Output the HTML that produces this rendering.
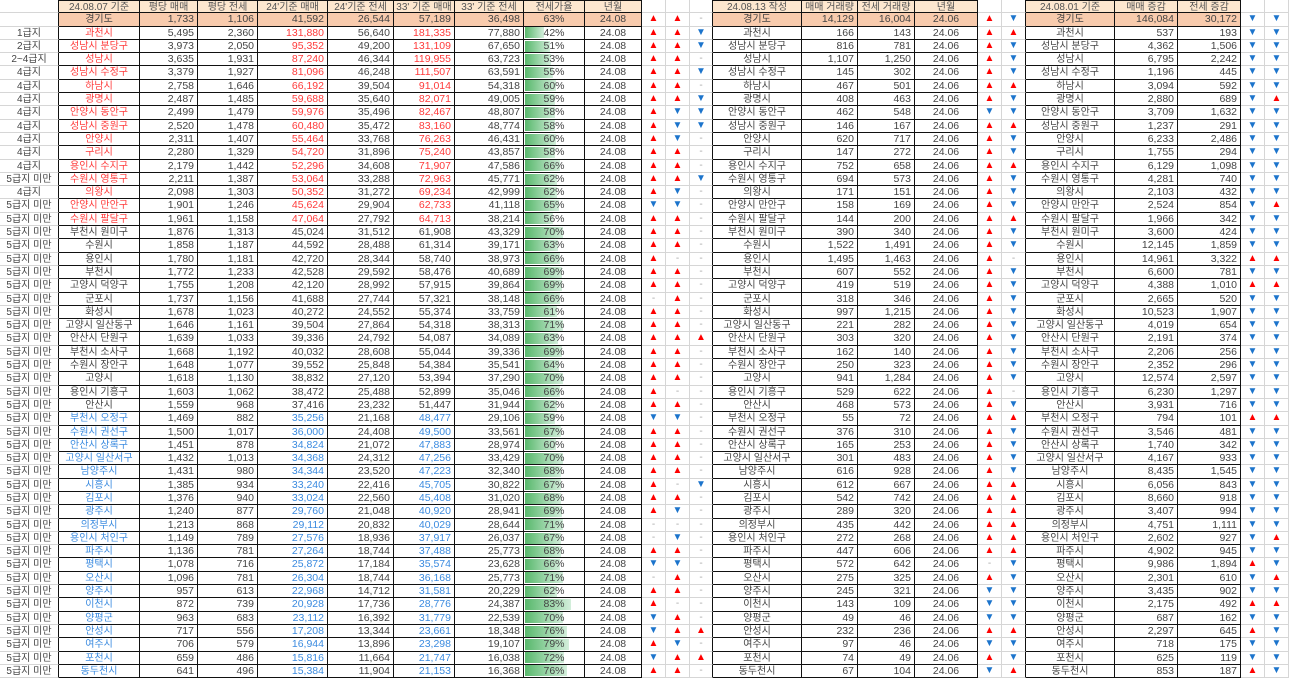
<!DOCTYPE html>
<html><head><meta charset="utf-8">
<style>
html,body{margin:0;padding:0;background:#fff;width:1289px;height:679px;overflow:hidden}
table{display:block;width:1289px;font-family:"Liberation Sans","Noto Sans CJK KR",sans-serif;font-size:10.5px;color:#444;border-spacing:0}
tbody{display:block}
tr{display:flex;height:13.31px;overflow:hidden}
td{display:block;flex:none;box-sizing:border-box;height:13.31px;padding:0 3px 0 0;border-right:1px solid #111;border-bottom:1px solid #111;text-align:right;white-space:nowrap;overflow:hidden;line-height:12px}
td:nth-child(1){width:59px}td:nth-child(2){width:81px}td:nth-child(3){width:58px}td:nth-child(4){width:60px}td:nth-child(5){width:70px}td:nth-child(6){width:66px}td:nth-child(7){width:61px}td:nth-child(8){width:69px}td:nth-child(9){width:61px}td:nth-child(10){width:57px}td:nth-child(11){width:24px}td:nth-child(12){width:24px}td:nth-child(13){width:23px}td:nth-child(14){width:89px}td:nth-child(15){width:56px}td:nth-child(16){width:57px}td:nth-child(17){width:63px}td:nth-child(18){width:24px}td:nth-child(19){width:24px}td:nth-child(20){width:89px}td:nth-child(21){width:63px}td:nth-child(22){width:63px}td:nth-child(23){width:24px}td:nth-child(24){width:24px}
tr.t td{border-top:1px solid #111;line-height:11px}
td.l{border-bottom:1px solid #d6d6d6;text-align:center;padding:1px 0 0 0;color:#444;font-size:10px}
tr.t td.l,tr.t td.g{border-top:none}
td.g{border-right:1px solid #d6d6d6;border-bottom:1px solid #d6d6d6;text-align:center;padding:0;font-size:10px}
td.k{border-right:1px solid #111}
td.c{text-align:center;padding:0}
td:nth-child(2),td:nth-child(14),td:nth-child(20){font-size:10px;padding-top:1px}
.r{color:#ff3a3a}
.b{color:#3b8be0}
.u{color:#f00}
.d{color:#1c74cc}
.n{color:#aaa}
tr.h td:not(.g):not(.l){background:#fde7cf;text-align:center;padding:1px 0 0 0;color:#555;font-size:10px}
tr.s td:not(.g):not(.l){background:#f8cbad}
td.p{text-align:center;padding:0;background:linear-gradient(90deg,#58b86c,#d3eedb) 1px 50%/var(--w) 11px no-repeat}
</style></head><body>
<table>
<tr class="h t"><td class=l></td><td>24.08.07 기준</td><td>평당 매매</td><td>평당 전세</td><td>24'기준 매매</td><td>24'기준 전세</td><td>33' 기준 매매</td><td>33' 기준 전세</td><td>전세가율</td><td>년월</td><td class=g></td><td class=g></td><td class="g k"></td><td>24.08.13 작성</td><td>매매 거래량</td><td>전세 거래량</td><td>년월</td><td class=g></td><td class="g k"></td><td>24.08.01 기준</td><td>매매 증감</td><td>전세 증감</td><td class=g></td><td class=g></td></tr>
<tr class=s><td class=l></td><td class=c>경기도</td><td>1,733</td><td>1,106</td><td>41,592</td><td>26,544</td><td>57,189</td><td>36,498</td><td class=c>63%</td><td class=c>24.08</td><td class="g u">▲</td><td class="g u">▲</td><td class="g k n">-</td><td class=c>경기도</td><td>14,129</td><td>16,004</td><td class=c>24.06</td><td class="g u">▲</td><td class="g k d">▼</td><td class=c>경기도</td><td>146,084</td><td>30,172</td><td class="g d">▼</td><td class="g d">▼</td></tr>
<tr><td class=l>1급지</td><td class="c r">과천시</td><td>5,495</td><td>2,360</td><td class=r>131,880</td><td>56,640</td><td class=r>181,335</td><td>77,880</td><td class=p style="--w:19px">42%</td><td class=c>24.08</td><td class="g u">▲</td><td class="g u">▲</td><td class="g k d">▼</td><td class=c>과천시</td><td>166</td><td>143</td><td class=c>24.06</td><td class="g u">▲</td><td class="g k u">▲</td><td class=c>과천시</td><td>537</td><td>193</td><td class="g d">▼</td><td class="g d">▼</td></tr>
<tr><td class=l>2급지</td><td class="c r">성남시 분당구</td><td>3,973</td><td>2,050</td><td class=r>95,352</td><td>49,200</td><td class=r>131,109</td><td>67,650</td><td class=p style="--w:25px">51%</td><td class=c>24.08</td><td class="g u">▲</td><td class="g u">▲</td><td class="g k d">▼</td><td class=c>성남시 분당구</td><td>816</td><td>781</td><td class=c>24.06</td><td class="g u">▲</td><td class="g k d">▼</td><td class=c>성남시 분당구</td><td>4,362</td><td>1,506</td><td class="g d">▼</td><td class="g d">▼</td></tr>
<tr><td class=l>2~4급지</td><td class="c r">성남시</td><td>3,635</td><td>1,931</td><td class=r>87,240</td><td>46,344</td><td class=r>119,955</td><td>63,723</td><td class=p style="--w:26px">53%</td><td class=c>24.08</td><td class="g u">▲</td><td class="g u">▲</td><td class="g k n">-</td><td class=c>성남시</td><td>1,107</td><td>1,250</td><td class=c>24.06</td><td class="g u">▲</td><td class="g k d">▼</td><td class=c>성남시</td><td>6,795</td><td>2,242</td><td class="g d">▼</td><td class="g d">▼</td></tr>
<tr><td class=l>4급지</td><td class="c r">성남시 수정구</td><td>3,379</td><td>1,927</td><td class=r>81,096</td><td>46,248</td><td class=r>111,507</td><td>63,591</td><td class=p style="--w:28px">55%</td><td class=c>24.08</td><td class="g u">▲</td><td class="g u">▲</td><td class="g k d">▼</td><td class=c>성남시 수정구</td><td>145</td><td>302</td><td class=c>24.06</td><td class="g u">▲</td><td class="g k d">▼</td><td class=c>성남시 수정구</td><td>1,196</td><td>445</td><td class="g d">▼</td><td class="g d">▼</td></tr>
<tr><td class=l>4급지</td><td class="c r">하남시</td><td>2,758</td><td>1,646</td><td class=r>66,192</td><td>39,504</td><td class=r>91,014</td><td>54,318</td><td class=p style="--w:31px">60%</td><td class=c>24.08</td><td class="g u">▲</td><td class="g u">▲</td><td class="g k n">-</td><td class=c>하남시</td><td>467</td><td>501</td><td class=c>24.06</td><td class="g u">▲</td><td class="g k u">▲</td><td class=c>하남시</td><td>3,094</td><td>592</td><td class="g d">▼</td><td class="g d">▼</td></tr>
<tr><td class=l>4급지</td><td class="c r">광명시</td><td>2,487</td><td>1,485</td><td class=r>59,688</td><td>35,640</td><td class=r>82,071</td><td>49,005</td><td class=p style="--w:30px">59%</td><td class=c>24.08</td><td class="g u">▲</td><td class="g u">▲</td><td class="g k d">▼</td><td class=c>광명시</td><td>408</td><td>463</td><td class=c>24.06</td><td class="g u">▲</td><td class="g k d">▼</td><td class=c>광명시</td><td>2,880</td><td>689</td><td class="g d">▼</td><td class="g u">▲</td></tr>
<tr><td class=l>4급지</td><td class="c r">안양시 동안구</td><td>2,499</td><td>1,479</td><td class=r>59,976</td><td>35,496</td><td class=r>82,467</td><td>48,807</td><td class=p style="--w:30px">58%</td><td class=c>24.08</td><td class="g u">▲</td><td class="g d">▼</td><td class="g k d">▼</td><td class=c>안양시 동안구</td><td>462</td><td>548</td><td class=c>24.06</td><td class="g d">▼</td><td class="g k d">▼</td><td class=c>안양시 동안구</td><td>3,709</td><td>1,632</td><td class="g d">▼</td><td class="g d">▼</td></tr>
<tr><td class=l>4급지</td><td class="c r">성남시 중원구</td><td>2,520</td><td>1,478</td><td class=r>60,480</td><td>35,472</td><td class=r>83,160</td><td>48,774</td><td class=p style="--w:30px">58%</td><td class=c>24.08</td><td class="g u">▲</td><td class="g d">▼</td><td class="g k d">▼</td><td class=c>성남시 중원구</td><td>146</td><td>167</td><td class=c>24.06</td><td class="g u">▲</td><td class="g k u">▲</td><td class=c>성남시 중원구</td><td>1,237</td><td>291</td><td class="g d">▼</td><td class="g d">▼</td></tr>
<tr><td class=l>4급지</td><td class="c r">안양시</td><td>2,311</td><td>1,407</td><td class=r>55,464</td><td>33,768</td><td class=r>76,263</td><td>46,431</td><td class=p style="--w:31px">60%</td><td class=c>24.08</td><td class="g u">▲</td><td class="g d">▼</td><td class="g k n">-</td><td class=c>안양시</td><td>620</td><td>717</td><td class=c>24.06</td><td class="g u">▲</td><td class="g k d">▼</td><td class=c>안양시</td><td>6,233</td><td>2,486</td><td class="g d">▼</td><td class="g d">▼</td></tr>
<tr><td class=l>4급지</td><td class="c r">구리시</td><td>2,280</td><td>1,329</td><td class=r>54,720</td><td>31,896</td><td class=r>75,240</td><td>43,857</td><td class=p style="--w:30px">58%</td><td class=c>24.08</td><td class="g u">▲</td><td class="g u">▲</td><td class="g k n">-</td><td class=c>구리시</td><td>147</td><td>272</td><td class=c>24.06</td><td class="g u">▲</td><td class="g k d">▼</td><td class=c>구리시</td><td>1,755</td><td>294</td><td class="g d">▼</td><td class="g d">▼</td></tr>
<tr><td class=l>4급지</td><td class="c r">용인시 수지구</td><td>2,179</td><td>1,442</td><td class=r>52,296</td><td>34,608</td><td class=r>71,907</td><td>47,586</td><td class=p style="--w:35px">66%</td><td class=c>24.08</td><td class="g u">▲</td><td class="g u">▲</td><td class="g k n">-</td><td class=c>용인시 수지구</td><td>752</td><td>658</td><td class=c>24.06</td><td class="g u">▲</td><td class="g k u">▲</td><td class=c>용인시 수지구</td><td>6,129</td><td>1,098</td><td class="g d">▼</td><td class="g d">▼</td></tr>
<tr><td class=l>5급지 미만</td><td class="c r">수원시 영통구</td><td>2,211</td><td>1,387</td><td class=r>53,064</td><td>33,288</td><td class=r>72,963</td><td>45,771</td><td class=p style="--w:32px">62%</td><td class=c>24.08</td><td class="g u">▲</td><td class="g u">▲</td><td class="g k d">▼</td><td class=c>수원시 영통구</td><td>694</td><td>573</td><td class=c>24.06</td><td class="g u">▲</td><td class="g k d">▼</td><td class=c>수원시 영통구</td><td>4,281</td><td>740</td><td class="g d">▼</td><td class="g d">▼</td></tr>
<tr><td class=l>4급지</td><td class="c r">의왕시</td><td>2,098</td><td>1,303</td><td class=r>50,352</td><td>31,272</td><td class=r>69,234</td><td>42,999</td><td class=p style="--w:32px">62%</td><td class=c>24.08</td><td class="g u">▲</td><td class="g d">▼</td><td class="g k n">-</td><td class=c>의왕시</td><td>171</td><td>151</td><td class=c>24.06</td><td class="g u">▲</td><td class="g k d">▼</td><td class=c>의왕시</td><td>2,103</td><td>432</td><td class="g d">▼</td><td class="g d">▼</td></tr>
<tr><td class=l>5급지 미만</td><td class="c r">안양시 만안구</td><td>1,901</td><td>1,246</td><td class=r>45,624</td><td>29,904</td><td class=r>62,733</td><td>41,118</td><td class=p style="--w:34px">65%</td><td class=c>24.08</td><td class="g d">▼</td><td class="g d">▼</td><td class="g k n">-</td><td class=c>안양시 만안구</td><td>158</td><td>169</td><td class=c>24.06</td><td class="g u">▲</td><td class="g k d">▼</td><td class=c>안양시 만안구</td><td>2,524</td><td>854</td><td class="g d">▼</td><td class="g u">▲</td></tr>
<tr><td class=l>5급지 미만</td><td class="c r">수원시 팔달구</td><td>1,961</td><td>1,158</td><td class=r>47,064</td><td>27,792</td><td class=r>64,713</td><td>38,214</td><td class=p style="--w:28px">56%</td><td class=c>24.08</td><td class="g u">▲</td><td class="g u">▲</td><td class="g k n">-</td><td class=c>수원시 팔달구</td><td>144</td><td>200</td><td class=c>24.06</td><td class="g u">▲</td><td class="g k u">▲</td><td class=c>수원시 팔달구</td><td>1,966</td><td>342</td><td class="g d">▼</td><td class="g d">▼</td></tr>
<tr><td class=l>5급지 미만</td><td class=c>부천시 원미구</td><td>1,876</td><td>1,313</td><td>45,024</td><td>31,512</td><td>61,908</td><td>43,329</td><td class=p style="--w:38px">70%</td><td class=c>24.08</td><td class="g u">▲</td><td class="g u">▲</td><td class="g k n">-</td><td class=c>부천시 원미구</td><td>390</td><td>340</td><td class=c>24.06</td><td class="g u">▲</td><td class="g k d">▼</td><td class=c>부천시 원미구</td><td>3,600</td><td>424</td><td class="g d">▼</td><td class="g d">▼</td></tr>
<tr><td class=l>5급지 미만</td><td class=c>수원시</td><td>1,858</td><td>1,187</td><td>44,592</td><td>28,488</td><td>61,314</td><td>39,171</td><td class=p style="--w:33px">63%</td><td class=c>24.08</td><td class="g u">▲</td><td class="g u">▲</td><td class="g k n">-</td><td class=c>수원시</td><td>1,522</td><td>1,491</td><td class=c>24.06</td><td class="g u">▲</td><td class="g k d">▼</td><td class=c>수원시</td><td>12,145</td><td>1,859</td><td class="g d">▼</td><td class="g d">▼</td></tr>
<tr><td class=l>5급지 미만</td><td class=c>용인시</td><td>1,780</td><td>1,181</td><td>42,720</td><td>28,344</td><td>58,740</td><td>38,973</td><td class=p style="--w:35px">66%</td><td class=c>24.08</td><td class="g u">▲</td><td class="g n">-</td><td class="g k n">-</td><td class=c>용인시</td><td>1,495</td><td>1,463</td><td class=c>24.06</td><td class="g u">▲</td><td class="g k n">-</td><td class=c>용인시</td><td>14,961</td><td>3,322</td><td class="g u">▲</td><td class="g u">▲</td></tr>
<tr><td class=l>5급지 미만</td><td class=c>부천시</td><td>1,772</td><td>1,233</td><td>42,528</td><td>29,592</td><td>58,476</td><td>40,689</td><td class=p style="--w:37px">69%</td><td class=c>24.08</td><td class="g u">▲</td><td class="g u">▲</td><td class="g k n">-</td><td class=c>부천시</td><td>607</td><td>552</td><td class=c>24.06</td><td class="g u">▲</td><td class="g k d">▼</td><td class=c>부천시</td><td>6,600</td><td>781</td><td class="g d">▼</td><td class="g d">▼</td></tr>
<tr><td class=l>5급지 미만</td><td class=c>고양시 덕양구</td><td>1,755</td><td>1,208</td><td>42,120</td><td>28,992</td><td>57,915</td><td>39,864</td><td class=p style="--w:37px">69%</td><td class=c>24.08</td><td class="g u">▲</td><td class="g u">▲</td><td class="g k n">-</td><td class=c>고양시 덕양구</td><td>419</td><td>519</td><td class=c>24.06</td><td class="g u">▲</td><td class="g k d">▼</td><td class=c>고양시 덕양구</td><td>4,388</td><td>1,010</td><td class="g u">▲</td><td class="g u">▲</td></tr>
<tr><td class=l>5급지 미만</td><td class=c>군포시</td><td>1,737</td><td>1,156</td><td>41,688</td><td>27,744</td><td>57,321</td><td>38,148</td><td class=p style="--w:35px">66%</td><td class=c>24.08</td><td class="g n">-</td><td class="g u">▲</td><td class="g k n">-</td><td class=c>군포시</td><td>318</td><td>346</td><td class=c>24.06</td><td class="g u">▲</td><td class="g k d">▼</td><td class=c>군포시</td><td>2,665</td><td>520</td><td class="g d">▼</td><td class="g d">▼</td></tr>
<tr><td class=l>5급지 미만</td><td class=c>화성시</td><td>1,678</td><td>1,023</td><td>40,272</td><td>24,552</td><td>55,374</td><td>33,759</td><td class=p style="--w:32px">61%</td><td class=c>24.08</td><td class="g u">▲</td><td class="g u">▲</td><td class="g k n">-</td><td class=c>화성시</td><td>997</td><td>1,215</td><td class=c>24.06</td><td class="g u">▲</td><td class="g k d">▼</td><td class=c>화성시</td><td>10,523</td><td>1,907</td><td class="g d">▼</td><td class="g d">▼</td></tr>
<tr><td class=l>5급지 미만</td><td class=c>고양시 일산동구</td><td>1,646</td><td>1,161</td><td>39,504</td><td>27,864</td><td>54,318</td><td>38,313</td><td class=p style="--w:38px">71%</td><td class=c>24.08</td><td class="g u">▲</td><td class="g u">▲</td><td class="g k n">-</td><td class=c>고양시 일산동구</td><td>221</td><td>282</td><td class=c>24.06</td><td class="g u">▲</td><td class="g k d">▼</td><td class=c>고양시 일산동구</td><td>4,019</td><td>654</td><td class="g d">▼</td><td class="g d">▼</td></tr>
<tr><td class=l>5급지 미만</td><td class=c>안산시 단원구</td><td>1,639</td><td>1,033</td><td>39,336</td><td>24,792</td><td>54,087</td><td>34,089</td><td class=p style="--w:33px">63%</td><td class=c>24.08</td><td class="g u">▲</td><td class="g u">▲</td><td class="g k u">▲</td><td class=c>안산시 단원구</td><td>303</td><td>320</td><td class=c>24.06</td><td class="g u">▲</td><td class="g k d">▼</td><td class=c>안산시 단원구</td><td>2,191</td><td>374</td><td class="g d">▼</td><td class="g d">▼</td></tr>
<tr><td class=l>5급지 미만</td><td class=c>부천시 소사구</td><td>1,668</td><td>1,192</td><td>40,032</td><td>28,608</td><td>55,044</td><td>39,336</td><td class=p style="--w:37px">69%</td><td class=c>24.08</td><td class="g u">▲</td><td class="g u">▲</td><td class="g k n">-</td><td class=c>부천시 소사구</td><td>162</td><td>140</td><td class=c>24.06</td><td class="g u">▲</td><td class="g k d">▼</td><td class=c>부천시 소사구</td><td>2,206</td><td>256</td><td class="g d">▼</td><td class="g d">▼</td></tr>
<tr><td class=l>5급지 미만</td><td class=c>수원시 장안구</td><td>1,648</td><td>1,077</td><td>39,552</td><td>25,848</td><td>54,384</td><td>35,541</td><td class=p style="--w:34px">64%</td><td class=c>24.08</td><td class="g u">▲</td><td class="g u">▲</td><td class="g k n">-</td><td class=c>수원시 장안구</td><td>250</td><td>323</td><td class=c>24.06</td><td class="g u">▲</td><td class="g k d">▼</td><td class=c>수원시 장안구</td><td>2,352</td><td>296</td><td class="g d">▼</td><td class="g d">▼</td></tr>
<tr><td class=l>5급지 미만</td><td class=c>고양시</td><td>1,618</td><td>1,130</td><td>38,832</td><td>27,120</td><td>53,394</td><td>37,290</td><td class=p style="--w:38px">70%</td><td class=c>24.08</td><td class="g u">▲</td><td class="g u">▲</td><td class="g k n">-</td><td class=c>고양시</td><td>941</td><td>1,284</td><td class=c>24.06</td><td class="g u">▲</td><td class="g k d">▼</td><td class=c>고양시</td><td>12,574</td><td>2,597</td><td class="g d">▼</td><td class="g d">▼</td></tr>
<tr><td class=l>5급지 미만</td><td class=c>용인시 기흥구</td><td>1,603</td><td>1,062</td><td>38,472</td><td>25,488</td><td>52,899</td><td>35,046</td><td class=p style="--w:35px">66%</td><td class=c>24.08</td><td class="g u">▲</td><td class="g n">-</td><td class="g k n">-</td><td class=c>용인시 기흥구</td><td>529</td><td>622</td><td class=c>24.06</td><td class="g u">▲</td><td class="g k n">-</td><td class=c>용인시 기흥구</td><td>6,230</td><td>1,297</td><td class="g d">▼</td><td class="g d">▼</td></tr>
<tr><td class=l>5급지 미만</td><td class=c>안산시</td><td>1,559</td><td>968</td><td>37,416</td><td>23,232</td><td>51,447</td><td>31,944</td><td class=p style="--w:32px">62%</td><td class=c>24.08</td><td class="g u">▲</td><td class="g u">▲</td><td class="g k n">-</td><td class=c>안산시</td><td>468</td><td>573</td><td class=c>24.06</td><td class="g u">▲</td><td class="g k d">▼</td><td class=c>안산시</td><td>3,931</td><td>716</td><td class="g d">▼</td><td class="g d">▼</td></tr>
<tr><td class=l>5급지 미만</td><td class="c b">부천시 오정구</td><td>1,469</td><td>882</td><td class=b>35,256</td><td>21,168</td><td class=b>48,477</td><td>29,106</td><td class=p style="--w:30px">59%</td><td class=c>24.08</td><td class="g d">▼</td><td class="g d">▼</td><td class="g k n">-</td><td class=c>부천시 오정구</td><td>55</td><td>72</td><td class=c>24.06</td><td class="g u">▲</td><td class="g k u">▲</td><td class=c>부천시 오정구</td><td>794</td><td>101</td><td class="g u">▲</td><td class="g u">▲</td></tr>
<tr><td class=l>5급지 미만</td><td class="c b">수원시 권선구</td><td>1,500</td><td>1,017</td><td class=b>36,000</td><td>24,408</td><td class=b>49,500</td><td>33,561</td><td class=p style="--w:36px">67%</td><td class=c>24.08</td><td class="g u">▲</td><td class="g u">▲</td><td class="g k n">-</td><td class=c>수원시 권선구</td><td>376</td><td>310</td><td class=c>24.06</td><td class="g u">▲</td><td class="g k d">▼</td><td class=c>수원시 권선구</td><td>3,546</td><td>481</td><td class="g d">▼</td><td class="g d">▼</td></tr>
<tr><td class=l>5급지 미만</td><td class="c b">안산시 상록구</td><td>1,451</td><td>878</td><td class=b>34,824</td><td>21,072</td><td class=b>47,883</td><td>28,974</td><td class=p style="--w:31px">60%</td><td class=c>24.08</td><td class="g u">▲</td><td class="g u">▲</td><td class="g k n">-</td><td class=c>안산시 상록구</td><td>165</td><td>253</td><td class=c>24.06</td><td class="g u">▲</td><td class="g k d">▼</td><td class=c>안산시 상록구</td><td>1,740</td><td>342</td><td class="g d">▼</td><td class="g d">▼</td></tr>
<tr><td class=l>5급지 미만</td><td class="c b">고양시 일산서구</td><td>1,432</td><td>1,013</td><td class=b>34,368</td><td>24,312</td><td class=b>47,256</td><td>33,429</td><td class=p style="--w:38px">70%</td><td class=c>24.08</td><td class="g u">▲</td><td class="g u">▲</td><td class="g k n">-</td><td class=c>고양시 일산서구</td><td>301</td><td>483</td><td class=c>24.06</td><td class="g u">▲</td><td class="g k d">▼</td><td class=c>고양시 일산서구</td><td>4,167</td><td>933</td><td class="g d">▼</td><td class="g d">▼</td></tr>
<tr><td class=l>5급지 미만</td><td class="c b">남양주시</td><td>1,431</td><td>980</td><td class=b>34,344</td><td>23,520</td><td class=b>47,223</td><td>32,340</td><td class=p style="--w:36px">68%</td><td class=c>24.08</td><td class="g u">▲</td><td class="g u">▲</td><td class="g k n">-</td><td class=c>남양주시</td><td>616</td><td>928</td><td class=c>24.06</td><td class="g u">▲</td><td class="g k d">▼</td><td class=c>남양주시</td><td>8,435</td><td>1,545</td><td class="g d">▼</td><td class="g d">▼</td></tr>
<tr><td class=l>5급지 미만</td><td class="c b">시흥시</td><td>1,385</td><td>934</td><td class=b>33,240</td><td>22,416</td><td class=b>45,705</td><td>30,822</td><td class=p style="--w:36px">67%</td><td class=c>24.08</td><td class="g u">▲</td><td class="g n">-</td><td class="g k d">▼</td><td class=c>시흥시</td><td>612</td><td>667</td><td class=c>24.06</td><td class="g u">▲</td><td class="g k u">▲</td><td class=c>시흥시</td><td>6,056</td><td>843</td><td class="g d">▼</td><td class="g d">▼</td></tr>
<tr><td class=l>5급지 미만</td><td class="c b">김포시</td><td>1,376</td><td>940</td><td class=b>33,024</td><td>22,560</td><td class=b>45,408</td><td>31,020</td><td class=p style="--w:36px">68%</td><td class=c>24.08</td><td class="g u">▲</td><td class="g u">▲</td><td class="g k n">-</td><td class=c>김포시</td><td>542</td><td>742</td><td class=c>24.06</td><td class="g u">▲</td><td class="g k u">▲</td><td class=c>김포시</td><td>8,660</td><td>918</td><td class="g d">▼</td><td class="g d">▼</td></tr>
<tr><td class=l>5급지 미만</td><td class="c b">광주시</td><td>1,240</td><td>877</td><td class=b>29,760</td><td>21,048</td><td class=b>40,920</td><td>28,941</td><td class=p style="--w:37px">69%</td><td class=c>24.08</td><td class="g u">▲</td><td class="g d">▼</td><td class="g k n">-</td><td class=c>광주시</td><td>289</td><td>320</td><td class=c>24.06</td><td class="g u">▲</td><td class="g k u">▲</td><td class=c>광주시</td><td>3,407</td><td>994</td><td class="g d">▼</td><td class="g d">▼</td></tr>
<tr><td class=l>5급지 미만</td><td class="c b">의정부시</td><td>1,213</td><td>868</td><td class=b>29,112</td><td>20,832</td><td class=b>40,029</td><td>28,644</td><td class=p style="--w:38px">71%</td><td class=c>24.08</td><td class="g n">-</td><td class="g n">-</td><td class="g k n">-</td><td class=c>의정부시</td><td>435</td><td>442</td><td class=c>24.06</td><td class="g u">▲</td><td class="g k u">▲</td><td class=c>의정부시</td><td>4,751</td><td>1,111</td><td class="g d">▼</td><td class="g d">▼</td></tr>
<tr><td class=l>5급지 미만</td><td class="c b">용인시 처인구</td><td>1,149</td><td>789</td><td class=b>27,576</td><td>18,936</td><td class=b>37,917</td><td>26,037</td><td class=p style="--w:36px">67%</td><td class=c>24.08</td><td class="g n">-</td><td class="g d">▼</td><td class="g k n">-</td><td class=c>용인시 처인구</td><td>272</td><td>268</td><td class=c>24.06</td><td class="g u">▲</td><td class="g k u">▲</td><td class=c>용인시 처인구</td><td>2,602</td><td>927</td><td class="g d">▼</td><td class="g u">▲</td></tr>
<tr><td class=l>5급지 미만</td><td class="c b">파주시</td><td>1,136</td><td>781</td><td class=b>27,264</td><td>18,744</td><td class=b>37,488</td><td>25,773</td><td class=p style="--w:36px">68%</td><td class=c>24.08</td><td class="g u">▲</td><td class="g u">▲</td><td class="g k n">-</td><td class=c>파주시</td><td>447</td><td>606</td><td class=c>24.06</td><td class="g u">▲</td><td class="g k u">▲</td><td class=c>파주시</td><td>4,902</td><td>945</td><td class="g d">▼</td><td class="g d">▼</td></tr>
<tr><td class=l>5급지 미만</td><td class="c b">평택시</td><td>1,078</td><td>716</td><td class=b>25,872</td><td>17,184</td><td class=b>35,574</td><td>23,628</td><td class=p style="--w:35px">66%</td><td class=c>24.08</td><td class="g d">▼</td><td class="g d">▼</td><td class="g k n">-</td><td class=c>평택시</td><td>572</td><td>642</td><td class=c>24.06</td><td class="g n">-</td><td class="g k d">▼</td><td class=c>평택시</td><td>9,986</td><td>1,894</td><td class="g u">▲</td><td class="g d">▼</td></tr>
<tr><td class=l>5급지 미만</td><td class="c b">오산시</td><td>1,096</td><td>781</td><td class=b>26,304</td><td>18,744</td><td class=b>36,168</td><td>25,773</td><td class=p style="--w:38px">71%</td><td class=c>24.08</td><td class="g n">-</td><td class="g u">▲</td><td class="g k n">-</td><td class=c>오산시</td><td>275</td><td>325</td><td class=c>24.06</td><td class="g u">▲</td><td class="g k d">▼</td><td class=c>오산시</td><td>2,301</td><td>610</td><td class="g d">▼</td><td class="g u">▲</td></tr>
<tr><td class=l>5급지 미만</td><td class="c b">양주시</td><td>957</td><td>613</td><td class=b>22,968</td><td>14,712</td><td class=b>31,581</td><td>20,229</td><td class=p style="--w:32px">62%</td><td class=c>24.08</td><td class="g u">▲</td><td class="g u">▲</td><td class="g k n">-</td><td class=c>양주시</td><td>245</td><td>321</td><td class=c>24.06</td><td class="g d">▼</td><td class="g k d">▼</td><td class=c>양주시</td><td>3,435</td><td>902</td><td class="g d">▼</td><td class="g d">▼</td></tr>
<tr><td class=l>5급지 미만</td><td class="c b">이천시</td><td>872</td><td>739</td><td class=b>20,928</td><td>17,736</td><td class=b>28,776</td><td>24,387</td><td class=p style="--w:46px">83%</td><td class=c>24.08</td><td class="g u">▲</td><td class="g n">-</td><td class="g k n">-</td><td class=c>이천시</td><td>143</td><td>109</td><td class=c>24.06</td><td class="g d">▼</td><td class="g k d">▼</td><td class=c>이천시</td><td>2,175</td><td>492</td><td class="g u">▲</td><td class="g u">▲</td></tr>
<tr><td class=l>5급지 미만</td><td class="c b">양평군</td><td>963</td><td>683</td><td class=b>23,112</td><td>16,392</td><td class=b>31,779</td><td>22,539</td><td class=p style="--w:38px">70%</td><td class=c>24.08</td><td class="g d">▼</td><td class="g u">▲</td><td class="g k n">-</td><td class=c>양평군</td><td>49</td><td>46</td><td class=c>24.06</td><td class="g d">▼</td><td class="g k d">▼</td><td class=c>양평군</td><td>687</td><td>162</td><td class="g d">▼</td><td class="g d">▼</td></tr>
<tr><td class=l>5급지 미만</td><td class="c b">안성시</td><td>717</td><td>556</td><td class=b>17,208</td><td>13,344</td><td class=b>23,661</td><td>18,348</td><td class=p style="--w:42px">76%</td><td class=c>24.08</td><td class="g d">▼</td><td class="g u">▲</td><td class="g k u">▲</td><td class=c>안성시</td><td>232</td><td>236</td><td class=c>24.06</td><td class="g u">▲</td><td class="g k u">▲</td><td class=c>안성시</td><td>2,297</td><td>645</td><td class="g u">▲</td><td class="g d">▼</td></tr>
<tr><td class=l>5급지 미만</td><td class="c b">여주시</td><td>706</td><td>579</td><td class=b>16,944</td><td>13,896</td><td class=b>23,298</td><td>19,107</td><td class=p style="--w:44px">79%</td><td class=c>24.08</td><td class="g u">▲</td><td class="g d">▼</td><td class="g k n">-</td><td class=c>여주시</td><td>97</td><td>46</td><td class=c>24.06</td><td class="g d">▼</td><td class="g k d">▼</td><td class=c>여주시</td><td>718</td><td>175</td><td class="g d">▼</td><td class="g d">▼</td></tr>
<tr><td class=l>5급지 미만</td><td class="c b">포천시</td><td>659</td><td>486</td><td class=b>15,816</td><td>11,664</td><td class=b>21,747</td><td>16,038</td><td class=p style="--w:39px">72%</td><td class=c>24.08</td><td class="g d">▼</td><td class="g u">▲</td><td class="g k u">▲</td><td class=c>포천시</td><td>74</td><td>49</td><td class=c>24.06</td><td class="g u">▲</td><td class="g k d">▼</td><td class=c>포천시</td><td>625</td><td>119</td><td class="g d">▼</td><td class="g d">▼</td></tr>
<tr><td class=l>5급지 미만</td><td class="c b">동두천시</td><td>641</td><td>496</td><td class=b>15,384</td><td>11,904</td><td class=b>21,153</td><td>16,368</td><td class=p style="--w:42px">76%</td><td class=c>24.08</td><td class="g u">▲</td><td class="g u">▲</td><td class="g k n">-</td><td class=c>동두천시</td><td>67</td><td>104</td><td class=c>24.06</td><td class="g d">▼</td><td class="g k u">▲</td><td class=c>동두천시</td><td>853</td><td>187</td><td class="g u">▲</td><td class="g d">▼</td></tr>
</table>
</body></html>
